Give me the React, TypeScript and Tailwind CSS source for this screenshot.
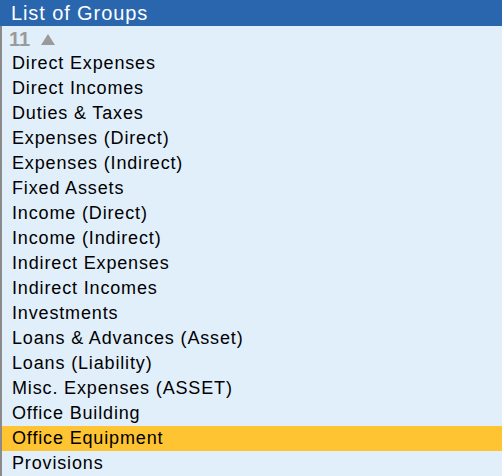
import React from 'react';

const groups = [
  'Direct Expenses',
  'Direct Incomes',
  'Duties & Taxes',
  'Expenses (Direct)',
  'Expenses (Indirect)',
  'Fixed Assets',
  'Income (Direct)',
  'Income (Indirect)',
  'Indirect Expenses',
  'Indirect Incomes',
  'Investments',
  'Loans & Advances (Asset)',
  'Loans (Liability)',
  'Misc. Expenses (ASSET)',
  'Office Building',
  'Office Equipment',
  'Provisions',
];

export default function App() {
  const selected = 'Office Equipment';

  return (
    <div className="w-[502px] h-[476px] overflow-hidden bg-[#e1effb] font-['Liberation_Sans',Arial,sans-serif]">
      {/* Title bar */}
      <div className="h-[26px] bg-[#2966ae] pl-[11px] text-[20px] leading-[26px] tracking-[0.9px] text-white">
        List of Groups
      </div>

      <div className="border-l-2 border-[#8a8a8a]">
        {/* Count of items above */}
        <div className="flex h-[25px] items-center gap-[11px] pl-[7px]">
          <span className="text-[20px] font-bold leading-none text-[#9a9a9a]">11</span>
          <svg width="14" height="11" viewBox="0 0 14 11" className="mt-[1px]">
            <polygon points="7,0 14,11 0,11" fill="#9a9a9a" />
          </svg>
        </div>

        {groups.map((name) => (
          <div
            key={name}
            className={
              name === selected
                ? 'h-[25px] bg-[#fec431] pl-[10px] text-[18px] leading-[24px] tracking-[0.85px] text-black'
                : 'h-[25px] pl-[10px] text-[18px] leading-[24px] tracking-[0.85px] text-black'
            }
          >
            {name}
          </div>
        ))}
      </div>
    </div>
  );
}
